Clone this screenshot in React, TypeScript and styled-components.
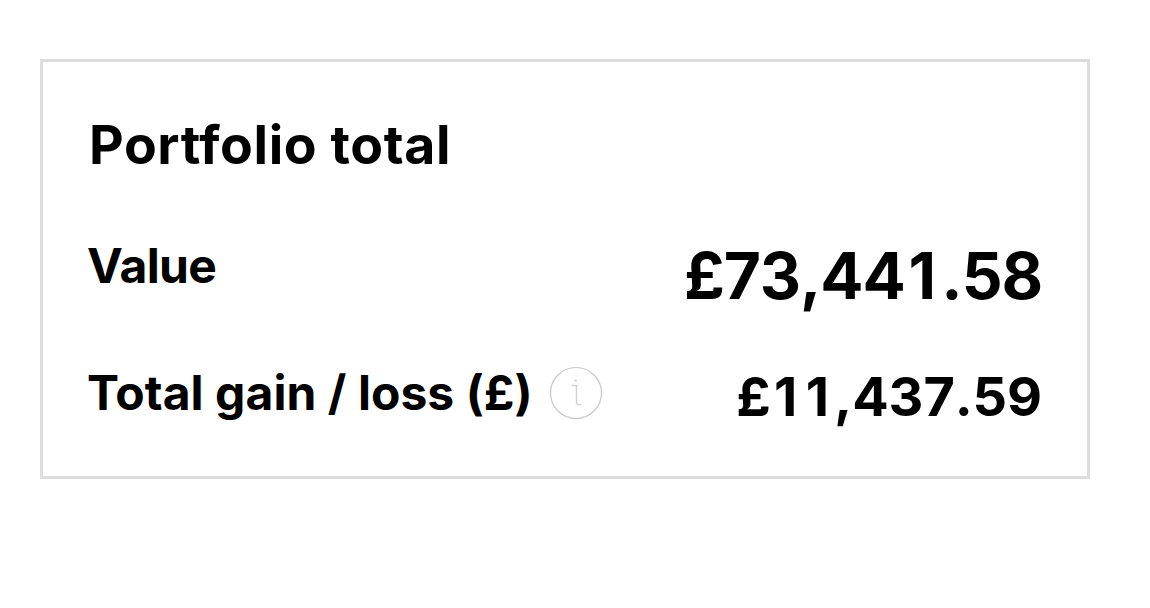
import React from "react";
import styled, { createGlobalStyle } from "styled-components";

const GlobalStyle = createGlobalStyle`
  * {
    box-sizing: border-box;
  }

  body {
    margin: 0;
    background-color: #ffffff;
    color: #000000;
    font-family: Inter, "Liberation Sans", Arial, sans-serif;
  }
`;

const Page = styled.main`
  width: 1150px;
  height: 608px;
  padding: 59px 60px 0 40px;
`;

const Card = styled.section`
  width: 1050px;
  height: 420px;
  padding: 50px 45px 0 44px;

  border: 3px solid #dddddd;
`;

const Title = styled.h2`
  margin: 0 0 59px;
  padding-left: 2px;
  font-size: 53.6px;
  font-weight: 700;
  line-height: 66px;
  letter-spacing: 0.6px;
`;

const Row = styled.div`
  display: flex;
  align-items: flex-start;
  justify-content: space-between;

  & + & {
    margin-top: 49px;
  }
`;

const LabelGroup = styled.div`
  display: flex;
  align-items: center;
`;

const Label = styled.span<{ spacing: number }>`
  font-size: 48px;
  font-weight: 700;
  line-height: 58px;
  letter-spacing: ${(props) => props.spacing}px;
  white-space: nowrap;
`;

const Figure = styled.span<{ large?: boolean }>`
  font-size: ${(props) => (props.large ? 64 : 54)}px;
  font-weight: 700;
  font-kerning: none;
  line-height: ${(props) => (props.large ? 78 : 66)}px;
  letter-spacing: ${(props) => (props.large ? -1.1 : -0.1)}px;
  white-space: nowrap;
`;

const One = styled.span`
  padding: 0 0.1em 0 0.06em;
`;

const InfoButton = styled.button`
  display: flex;
  margin: 0 0 0 16px;
  padding: 0;
  border: none;
  background: none;
  cursor: pointer;
`;

function InfoIcon() {
  return (
    <svg width="54" height="54" viewBox="0 0 54 54" fill="none">
      <circle cx="27" cy="27" r="25.5" stroke="#c8c8c8" strokeWidth="1.2" />
      <path
        d="M22.5 19.5H27.5V36.5Q27.5 38.5 29.5 38.5H32"
        stroke="#d2d2d2"
        strokeWidth="1.4"
      />
      <circle cx="26.7" cy="14.5" r="1.2" fill="#d2d2d2" />
    </svg>
  );
}

interface IAmount {
  value: string;
  large?: boolean;
}

// The narrow "1" gets side padding so it takes as much room as other digits.
function Amount({ value, large }: IAmount) {
  return (
    <Figure large={large}>
      {value
        .split(/(1)/)
        .map((part, index) => (part === "1" ? <One key={index}>1</One> : part))}
    </Figure>
  );
}

function App() {
  return (
    <>
      <GlobalStyle />
      <Page>
        <Card>
          <Title>Portfolio total</Title>
          <Row>
            <Label spacing={-0.6}>Value</Label>
            <Amount large value="£73,441.58" />
          </Row>
          <Row>
            <LabelGroup>
              <Label spacing={0.05}>Total gain / loss (£)</Label>
              <InfoButton aria-label="About total gain / loss">
                <InfoIcon />
              </InfoButton>
            </LabelGroup>
            <Amount value="£11,437.59" />
          </Row>
        </Card>
      </Page>
    </>
  );
}

export default App;
